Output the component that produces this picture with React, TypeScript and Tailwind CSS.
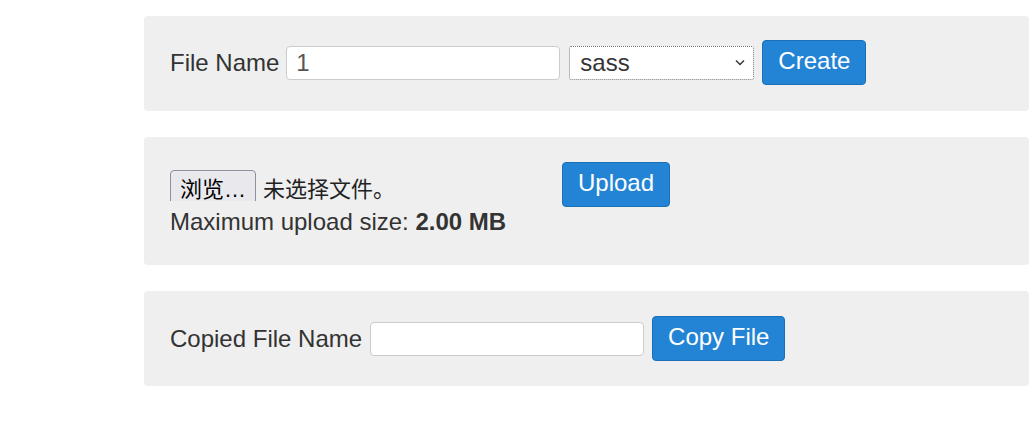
import React from "react";

const font = "font-['Liberation_Sans','Noto_Sans_CJK_SC',sans-serif]";

const Button = ({ label }: { label: string }) => (
  <button className="h-[45px] px-[15px] pb-[4px] border border-[#1b6fb6] bg-[#2384d5] text-white text-[24px] leading-none rounded-[4px]">
    {label}
  </button>
);

const TextBox = ({ value }: { value?: string }) => (
  <div className="w-[274px] h-[34px] bg-white border border-[#cccccc] rounded-[4px] px-[9px] flex items-center text-[24px] text-[#555] leading-none">
    {value}
  </div>
);

const App = () => {
  return (
    <div className={`${font} w-[1033px] h-[442px] bg-white text-[#333] pt-[16px]`}>
      <div className="ml-[144px] w-[885px] flex flex-col gap-[26px]">
        {/* create file */}
        <div className="bg-[#efefef] rounded-[4px] pl-[26px] pt-[24px] pb-[26px] flex items-center">
          <span className="text-[24px] leading-none mr-[7px]">File Name</span>
          <TextBox value="1" />
          <div className="ml-[9px] mr-[8px] w-[185px] h-[34px] bg-white border border-dotted border-[#777] rounded-[2px] pl-[10px] pr-[8px] flex items-center justify-between text-[24px] leading-none text-[#333]">
            <span>sass</span>
            <svg width="10" height="7" viewBox="0 0 10 7" fill="none" stroke="#333" strokeWidth="1.4">
              <path d="M1 1.5l4 4 4-4" />
            </svg>
          </div>
          <Button label="Create" />
        </div>

        {/* upload */}
        <div className="bg-[#efefef] rounded-[4px] h-[128px] pl-[26px] pt-[25px] flex items-start">
          <div className="w-[392px] pt-[8px]">
            <div className="h-[31px] overflow-hidden flex items-start">
              <span className="h-[40px] px-[9px] border border-[#8f8f9d] bg-[#e9e9ed] rounded-[4px] flex items-center text-[22px] text-black leading-none">
                浏览…
              </span>
              <span className="ml-[7px] h-[40px] flex items-center text-[22px] leading-none text-[#222]">未选择文件。</span>
            </div>
            <p className="mt-[7px] text-[24px] leading-[28px]">
              Maximum upload size: <b>2.00 MB</b>
            </p>
          </div>
          <Button label="Upload" />
        </div>

        {/* copy file */}
        <div className="bg-[#efefef] rounded-[4px] pl-[26px] pt-[25px] pb-[25px] flex items-center">
          <span className="text-[24px] leading-none mr-[8px]">Copied File Name</span>
          <TextBox />
          <div className="ml-[8px]">
            <Button label="Copy File" />
          </div>
        </div>
      </div>
    </div>
  );
};

export default App;
